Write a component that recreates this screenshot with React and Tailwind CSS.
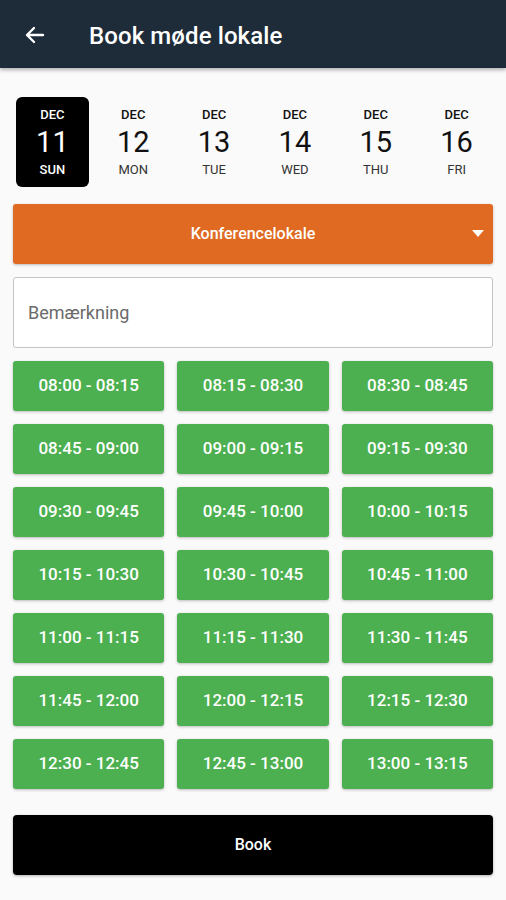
import { useState } from "react";

const days = [
  { month: "DEC", day: 11, name: "SUN" },
  { month: "DEC", day: 12, name: "MON" },
  { month: "DEC", day: 13, name: "TUE" },
  { month: "DEC", day: 14, name: "WED" },
  { month: "DEC", day: 15, name: "THU" },
  { month: "DEC", day: 16, name: "FRI" },
];

const slots = [
  "08:00 - 08:15", "08:15 - 08:30", "08:30 - 08:45",
  "08:45 - 09:00", "09:00 - 09:15", "09:15 - 09:30",
  "09:30 - 09:45", "09:45 - 10:00", "10:00 - 10:15",
  "10:15 - 10:30", "10:30 - 10:45", "10:45 - 11:00",
  "11:00 - 11:15", "11:15 - 11:30", "11:30 - 11:45",
  "11:45 - 12:00", "12:00 - 12:15", "12:15 - 12:30",
  "12:30 - 12:45", "12:45 - 13:00", "13:00 - 13:15",
];

export default function App() {
  const [selected, setSelected] = useState(11);

  return (
    <div className="min-h-[900px] bg-[#fafafa] font-['Roboto',sans-serif]">
      {/* Toolbar */}
      <header className="h-[68px] bg-[#1e2b38] flex items-center shadow-[0_2px_4px_rgba(0,0,0,0.3)] relative z-10">
        <button className="w-[70px] pl-[23px] pt-[2px] text-white">
          <svg width="24" height="24" viewBox="0 0 24 24" fill="none" stroke="currentColor" strokeWidth="2.4" strokeLinecap="round" strokeLinejoin="round">
            <path d="M20 12H4.5M11 5l-7 7 7 7" />
          </svg>
        </button>
        <h1 className="ml-[19px] pt-[3px] text-white text-[24px] font-medium tracking-[0.1px]">Book møde lokale</h1>
      </header>

      <main className="px-[13px]">
        {/* Date strip */}
        <div className="grid grid-cols-6 -ml-[1px] -mr-[4px] pt-[29px] pb-[17px]">
          {days.map(d => {
            const active = d.day === selected;
            return (
              <button
                key={d.day}
                onClick={() => setSelected(d.day)}
                className={
                  "h-[90px] mx-[4px] rounded-[6px] flex flex-col items-center justify-center " +
                  (active ? "bg-black text-white" : "text-[#111]")
                }
              >
                <span className="text-[13px] font-medium leading-[15px]">{d.month}</span>
                <span className="text-[29px] leading-[40px]">{d.day}</span>
                <span className={"text-[13px] leading-[15px] " + (active ? "font-medium" : "text-[#333]")}>{d.name}</span>
              </button>
            );
          })}
        </div>

        {/* Room select */}
        <div className="h-[60px] bg-[#e06a22] rounded-[3px] shadow-[0_1px_3px_rgba(0,0,0,0.25)] flex items-center justify-center relative">
          <span className="text-white text-[16px] font-medium">Konferencelokale</span>
          <svg className="absolute right-[9px] top-[26px]" width="12" height="7" viewBox="0 0 12 7">
            <path d="M0 0h12L6 7z" fill="white" />
          </svg>
        </div>

        {/* Remark */}
        <input
          placeholder="Bemærkning"
          className="mt-[13px] w-full h-[71px] bg-white border border-[#c4c4c4] rounded-[3px] px-[14px] text-[18px] placeholder:text-[#6b6b6b] outline-none"
        />

        {/* Time slots */}
        <div className="grid grid-cols-3 gap-x-[13px] gap-y-[13px] mt-[13px]">
          {slots.map(s => (
            <button
              key={s}
              className="h-[50px] bg-[#4caf50] rounded-[3px] shadow-[0_1px_3px_rgba(0,0,0,0.25)] text-white text-[17px] font-medium"
            >
              {s}
            </button>
          ))}
        </div>

        <button className="mt-[26px] w-full h-[60px] bg-black rounded-[4px] shadow-[0_1px_3px_rgba(0,0,0,0.3)] text-white text-[16px] font-medium">
          Book
        </button>
      </main>
    </div>
  );
}
